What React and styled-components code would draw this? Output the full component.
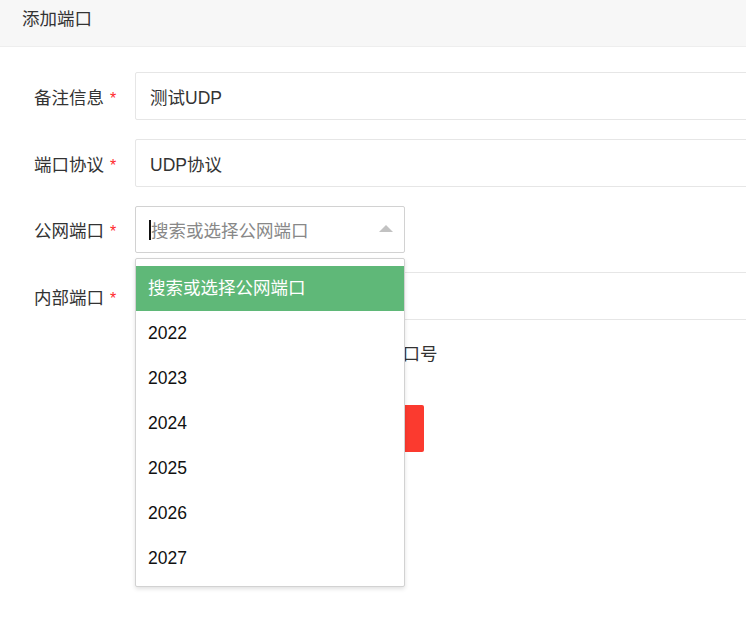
import React from 'react'
import styled, { createGlobalStyle } from 'styled-components'

const GlobalStyle = createGlobalStyle`
  html, body {
    margin: 0;
    padding: 0;
    background: #fff;
    overflow: hidden;
  }
  body {
    font-family: "Liberation Sans", "Noto Sans CJK SC", sans-serif;
    color: #333;
  }
`

const ports = ['2022', '2023', '2024', '2025', '2026', '2027']

const App = () => {
  return (
    <Page>
      <GlobalStyle />
      <Header>添加端口</Header>
      <Form>
        <Row>
          <Label>备注信息<Star>*</Star></Label>
          <Input defaultValue="测试UDP" />
        </Row>
        <Row>
          <Label>端口协议<Star>*</Star></Label>
          <Input defaultValue="UDP协议" />
        </Row>
        <Row>
          <Label>公网端口<Star>*</Star></Label>
          <SelectWrap>
            <SelectBox>
              <Caret />
              <Placeholder>搜索或选择公网端口</Placeholder>
              <Arrow />
            </SelectBox>
            <Dropdown>
              <Option $active>搜索或选择公网端口</Option>
              {ports.map((p) => (
                <Option key={p}>{p}</Option>
              ))}
            </Dropdown>
          </SelectWrap>
        </Row>
        <Row>
          <Label>内部端口<Star>*</Star></Label>
          <Input defaultValue="" />
        </Row>
        <Hint>内部端口不填写则默认使用公网端口号</Hint>
        <SubmitBtn>立即提交</SubmitBtn>
      </Form>
    </Page>
  )
}

const Page = styled.div`
  width: 746px;
  height: 623px;
  overflow: hidden;
`

const Header = styled.div`
  height: 46px;
  line-height: 38px;
  padding-left: 22px;
  background: #f7f7f7;
  border-bottom: 1px solid #eeeeee;
  font-size: 17.5px;
  color: #333;
`

const Form = styled.div`
  padding-top: 25px;
`

const Row = styled.div`
  display: flex;
  align-items: center;
  margin-bottom: 19px;
`

const Label = styled.div`
  flex: 0 0 135px;
  box-sizing: border-box;
  padding-left: 34px;
  font-size: 17.5px;
  color: #333;
  white-space: nowrap;
`

const Star = styled.span`
  color: #ff2a2a;
  margin-left: 6px;
  font-size: 16px;
`

const Input = styled.input`
  flex: 0 0 720px;
  height: 48px;
  box-sizing: border-box;
  border: 1px solid #e6e6e6;
  border-radius: 2px;
  padding: 0 14px;
  font-family: "Liberation Sans", "Noto Sans CJK SC", sans-serif;
  font-size: 17.5px;
  color: #333;
  outline: none;
`

const SelectWrap = styled.div`
  position: relative;
  flex: 0 0 270px;
`

const SelectBox = styled.div`
  height: 47px;
  box-sizing: border-box;
  border: 1px solid #d2d2d2;
  border-radius: 2px;
  display: flex;
  align-items: center;
  padding-left: 13px;
`

const Caret = styled.span`
  width: 2px;
  height: 20px;
  background: #111;
`

const Placeholder = styled.span`
  flex: 1;
  font-size: 17.5px;
  color: #888;
`

const Arrow = styled.span`
  width: 0;
  height: 0;
  margin-right: 11px;
  margin-bottom: 2px;
  border-left: 7.5px solid transparent;
  border-right: 7.5px solid transparent;
  border-bottom: 7.5px solid #c2c2c2;
`

const Dropdown = styled.div`
  position: absolute;
  z-index: 10;
  top: 52px;
  left: 0;
  width: 270px;
  box-sizing: border-box;
  padding: 7px 0 5px;
  background: #fff;
  border: 1px solid #d2d2d2;
  border-radius: 2px;
  box-shadow: 0 2px 4px rgba(0, 0, 0, 0.12);
`

const Option = styled.div`
  height: 45px;
  line-height: 45px;
  padding-left: 12px;
  font-size: 17.5px;
  color: ${(p) => (p.$active ? '#fff' : '#111')};
  background: ${(p) => (p.$active ? '#5fb878' : '#fff')};
`

const Hint = styled.div`
  margin: 4px 0 0 140px;
  height: 30px;
  line-height: 30px;
  font-size: 17.5px;
  color: #333;
`

const SubmitBtn = styled.button`
  margin: 36px 0 0 135px;
  width: 289px;
  height: 47px;
  border: none;
  border-radius: 2px;
  background: #fb3a2f;
  color: #fff;
  font-family: "Liberation Sans", "Noto Sans CJK SC", sans-serif;
  font-size: 17.5px;
`

export default App
